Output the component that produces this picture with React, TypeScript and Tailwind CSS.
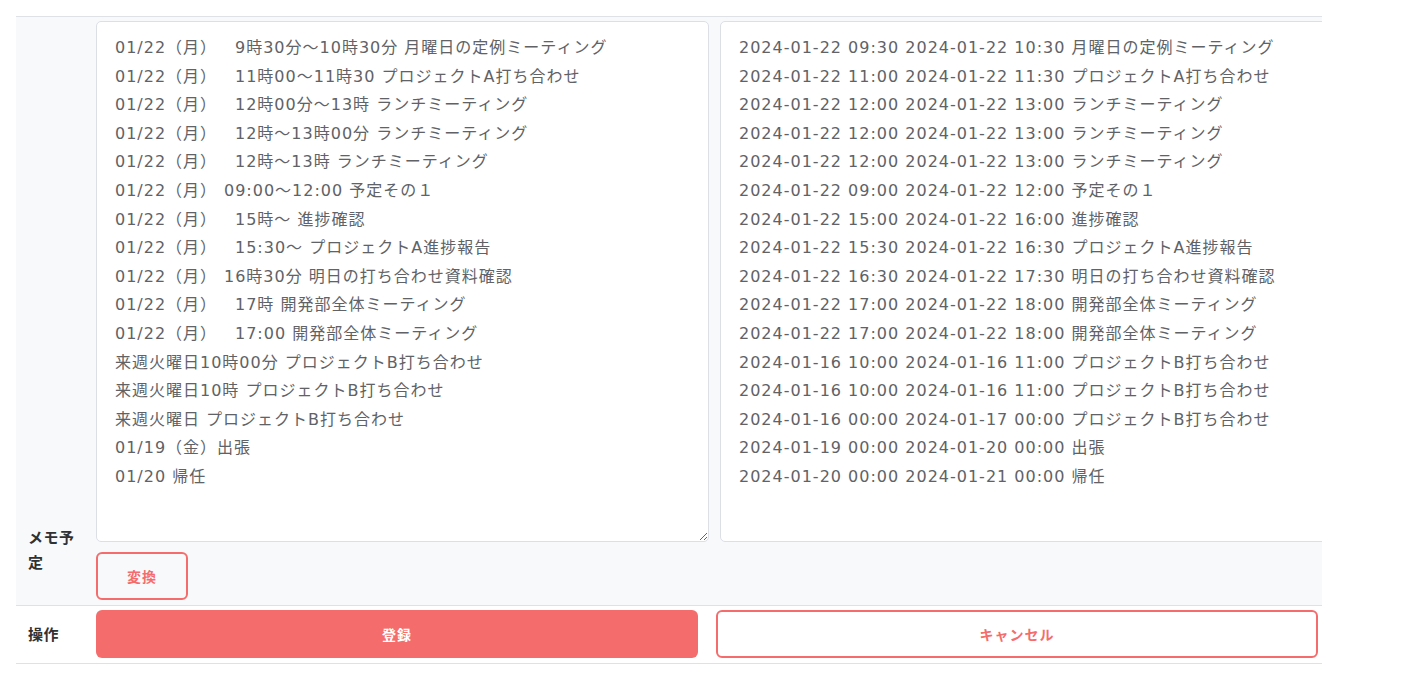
import React from "react";

const leftLines: { d?: string; t: string; ind?: number }[] = [
  { d: "01/22（月）", t: "9時30分～10時30分 月曜日の定例ミーティング", ind: 120 },
  { d: "01/22（月）", t: "11時00～11時30 プロジェクトA打ち合わせ", ind: 120 },
  { d: "01/22（月）", t: "12時00分～13時 ランチミーティング", ind: 120 },
  { d: "01/22（月）", t: "12時～13時00分 ランチミーティング", ind: 120 },
  { d: "01/22（月）", t: "12時～13時 ランチミーティング", ind: 120 },
  { d: "01/22（月）", t: "09:00～12:00 予定その１", ind: 109 },
  { d: "01/22（月）", t: "15時～ 進捗確認", ind: 120 },
  { d: "01/22（月）", t: "15:30～ プロジェクトA進捗報告", ind: 120 },
  { d: "01/22（月）", t: "16時30分 明日の打ち合わせ資料確認", ind: 109 },
  { d: "01/22（月）", t: "17時 開発部全体ミーティング", ind: 120 },
  { d: "01/22（月）", t: "17:00 開発部全体ミーティング", ind: 120 },
  { t: "来週火曜日10時00分 プロジェクトB打ち合わせ" },
  { t: "来週火曜日10時 プロジェクトB打ち合わせ" },
  { t: "来週火曜日 プロジェクトB打ち合わせ" },
  { t: "01/19（金）出張" },
  { t: "01/20 帰任" },
];

const rightLines = [
  "2024-01-22 09:30 2024-01-22 10:30 月曜日の定例ミーティング",
  "2024-01-22 11:00 2024-01-22 11:30 プロジェクトA打ち合わせ",
  "2024-01-22 12:00 2024-01-22 13:00 ランチミーティング",
  "2024-01-22 12:00 2024-01-22 13:00 ランチミーティング",
  "2024-01-22 12:00 2024-01-22 13:00 ランチミーティング",
  "2024-01-22 09:00 2024-01-22 12:00 予定その１",
  "2024-01-22 15:00 2024-01-22 16:00 進捗確認",
  "2024-01-22 15:30 2024-01-22 16:30 プロジェクトA進捗報告",
  "2024-01-22 16:30 2024-01-22 17:30 明日の打ち合わせ資料確認",
  "2024-01-22 17:00 2024-01-22 18:00 開発部全体ミーティング",
  "2024-01-22 17:00 2024-01-22 18:00 開発部全体ミーティング",
  "2024-01-16 10:00 2024-01-16 11:00 プロジェクトB打ち合わせ",
  "2024-01-16 10:00 2024-01-16 11:00 プロジェクトB打ち合わせ",
  "2024-01-16 00:00 2024-01-17 00:00 プロジェクトB打ち合わせ",
  "2024-01-19 00:00 2024-01-20 00:00 出張",
  "2024-01-20 00:00 2024-01-21 00:00 帰任",
];

const taFont = {
  fontFamily: '"DejaVu Sans", "Noto Sans CJK JP", sans-serif',
};

export default function App() {
  return (
    <div className="w-[1426px] h-[678px] bg-white pt-[16px] pl-[16px]">
      <div
        className="w-[1306px] overflow-hidden border-b border-[#dee2e6]"
        style={{ fontFamily: '"Noto Sans CJK JP", sans-serif' }}
      >
        {/* memo row */}
        <div className="flex bg-[#f8f9fa] border-t border-[#dee2e6]">
          <div className="w-[80px] shrink-0 pl-[12px] pr-[8px] flex items-end pb-[31px]">
            <span className="text-[15px] font-bold leading-[25px] tracking-[0.5px] text-[#303133]">
              メモ予定
            </span>
          </div>
          <div className="flex-1 min-w-0 pt-[4px] pb-[5px] flex flex-col">
            <div className="flex gap-[11px]">
              <div
                className="w-[613px] h-[521px] shrink-0 bg-white border border-[#dcdfe6] rounded-[5px] pl-[18px] pr-3 pt-[12px] text-[16px] leading-[28.6px] tracking-[1px] text-[#606266] resize overflow-auto whitespace-pre"
                style={taFont}
              >
                {leftLines.map((l, i) => (
                  <div key={i}>
                    {l.d ? (
                      <>
                        <span
                          className={
                            l.ind === 120
                              ? "inline-block w-[120px]"
                              : "inline-block w-[109px]"
                          }
                        >
                          {l.d}
                        </span>
                        <span>{l.t}</span>
                      </>
                    ) : (
                      <span>{l.t}</span>
                    )}
                  </div>
                ))}
              </div>
              <div
                className="w-[613px] h-[521px] shrink-0 bg-white border border-[#dcdfe6] rounded-[5px] pl-[18px] pr-3 pt-[12px] text-[16px] leading-[28.6px] tracking-[1px] text-[#606266] overflow-hidden whitespace-pre"
                style={taFont}
              >
                {rightLines.map((l, i) => (
                  <div key={i}>{l}</div>
                ))}
              </div>
            </div>
            <div className="mt-[10px]">
              <button className="w-[92px] h-[48px] rounded-md border-2 border-[#f56c6c] text-[#f56c6c] text-[14px] font-bold tracking-[1px] bg-transparent">
                変換
              </button>
            </div>
          </div>
        </div>
        {/* operation row */}
        <div className="flex bg-white border-t border-[#dee2e6]">
          <div className="w-[80px] shrink-0 pl-[12px] flex items-center">
            <span className="text-[15px] font-bold tracking-[0.5px] text-[#303133]">
              操作
            </span>
          </div>
          <div className="flex-1 min-w-0 pt-[4px] pb-[5px] pr-[4px] grid grid-cols-2 gap-[18px]">
            <button className="h-[48px] rounded-md bg-[#f56c6c] text-white text-[14px] font-bold tracking-[1px]">
              登録
            </button>
            <button className="h-[48px] rounded-md border-2 border-[#f56c6c] bg-white text-[#f56c6c] text-[14px] font-bold tracking-[1px]">
              キャンセル
            </button>
          </div>
        </div>
      </div>
    </div>
  );
}
